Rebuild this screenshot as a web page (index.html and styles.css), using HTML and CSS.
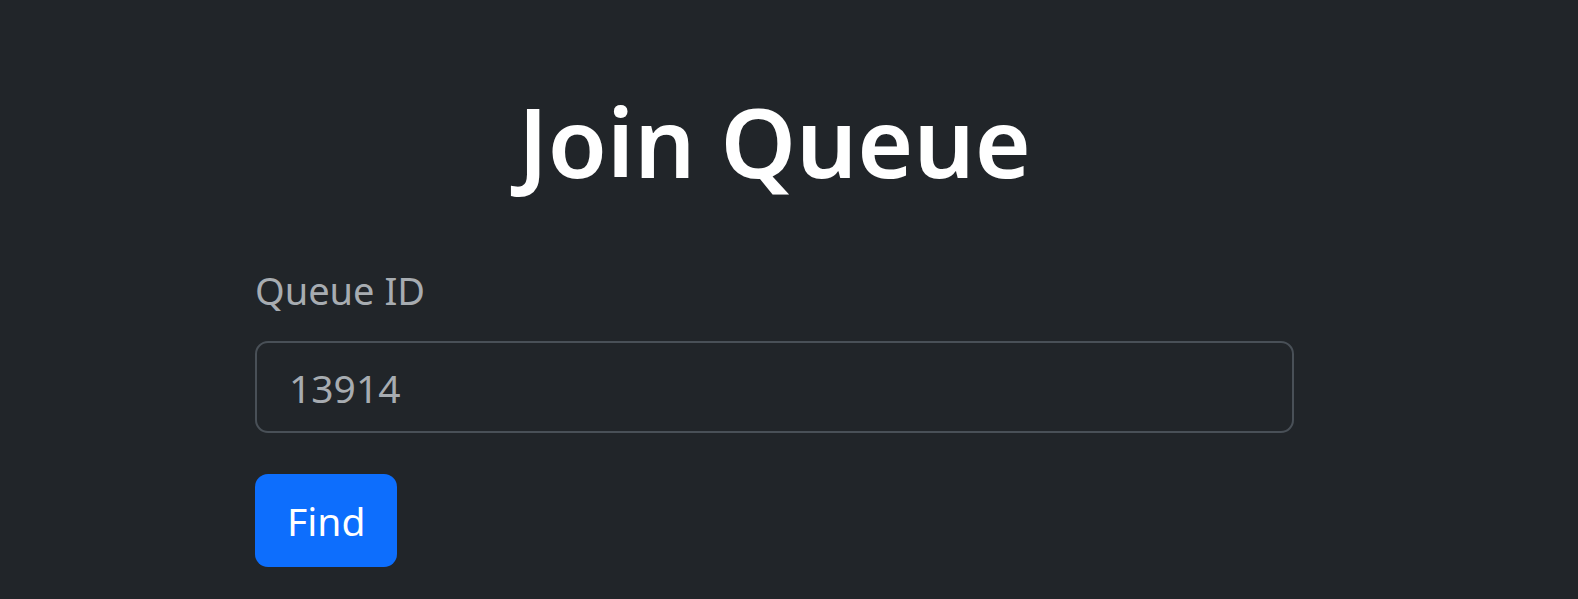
FILE: index.html
```html
<!DOCTYPE html>
<html lang="en">
<head>
<meta charset="utf-8">
<title>Join Queue</title>
<link rel="stylesheet" href="styles.css">
</head>
<body>
<main class="page">
  <h1 class="title">Join Queue</h1>
  <form class="form">
    <label class="label" for="qid">Queue ID</label>
    <input class="input" id="qid" type="text" value="13914">
    <button class="btn" type="button">Find</button>
  </form>
</main>
</body>
</html>
```
FILE: styles.css
```css
html, body {
  margin: 0;
  padding: 0;
  background: #212529;
  height: 100%;
}
body {
  font-family: "Noto Sans", "Open Sans", sans-serif;
  color: #dee2e6;
}
.page {
  width: 1039px;
  margin-left: 255px;
  padding-top: 81px;
}
.title {
  margin: 0;
  font-size: 96px;
  line-height: 120px;
  font-weight: 600;
  text-align: center;
  color: #ffffff;
}
.form {
  display: flex;
  flex-direction: column;
  align-items: flex-start;
  margin-top: 59px;
}
.label {
  font-size: 38px;
  line-height: 60px;
  color: #a7acb1;
  margin-bottom: 21px;
}
.input {
  box-sizing: border-box;
  width: 100%;
  height: 92px;
  padding: 0 32px;
  font-family: inherit;
  font-size: 39px;
  color: #a7acb1;
  background: #212529;
  border: 2px solid #495057;
  border-radius: 13px;
  outline: none;
  margin: 0;
}
.btn {
  box-sizing: border-box;
  margin-top: 41px;
  height: 93px;
  padding: 0 32px;
  font-family: inherit;
  font-size: 39px;
  color: #ffffff;
  background: #0d6efd;
  border: none;
  border-radius: 13px;
}
```
